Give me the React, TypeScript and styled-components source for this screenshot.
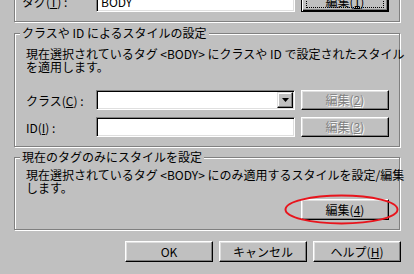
import React from 'react';
import styled, { createGlobalStyle, css } from 'styled-components';

const Global = createGlobalStyle`
  html, body { margin: 0; padding: 0; background: #c0c0c0; }
  body {
    width: 414px; height: 274px; overflow: hidden;
    font-family: "Noto Sans CJK JP", "Noto Sans", sans-serif;
    font-size: 12px; color: #000;
  }
`;

const Dialog = styled.div`
  box-sizing: border-box;
  width: 414px;
  height: 274px;
  padding: 0 14px;
  display: flex;
  flex-direction: column;
  overflow: hidden;
`;

const Group = styled.div<{ $h: number; $mt: number; $pt: number; $pl?: number }>`
  position: relative;
  box-sizing: border-box;
  flex-shrink: 0;
  height: ${p => p.$h}px;
  margin-top: ${p => p.$mt}px;
  padding: ${p => p.$pt}px 10px 0 ${p => p.$pl ?? 11}px;
  border: 1px solid #808080;
  box-shadow: inset 1px 1px 0 #fff, 1px 1px 0 #fff;
`;

const Legend = styled.span`
  position: absolute;
  top: -8px;
  left: 5px;
  padding: 0 2px;
  background: #c0c0c0;
  line-height: 14px;
  white-space: nowrap;
`;

const Desc = styled.p`
  margin: 0;
  line-height: 13px;
  white-space: nowrap;
`;

const U = styled.span`
  text-decoration: underline;
`;

const FieldRow = styled.div<{ $mt: number; $h?: number }>`
  display: flex;
  align-items: center;
  height: ${p => p.$h ?? 20}px;
  margin-top: ${p => p.$mt}px;
`;

const FieldLabel = styled.label<{ $w: number }>`
  flex-shrink: 0;
  width: ${p => p.$w}px;
  white-space: nowrap;
`;

const Field = styled.div`
  box-sizing: border-box;
  flex-shrink: 0;
  width: 199px;
  height: 100%;
  padding: 2px 2px 2px 4px;
  background: #fff;
  border: 1px solid;
  border-color: #808080 #fff #fff #808080;
  box-shadow: inset 1px 1px 0 #000, inset -1px -1px 0 #dfdfdf;
  display: flex;
  align-items: center;
  justify-content: space-between;
  line-height: 14px;
`;

const ComboField = styled(Field)`
  padding-right: 1px;
`;

const DropBtn = styled.span`
  box-sizing: border-box;
  width: 16px;
  height: 16px;
  background: #c0c0c0;
  border: 1px solid;
  border-color: #dfdfdf #000 #000 #dfdfdf;
  box-shadow: inset -1px -1px 0 #808080, inset 1px 1px 0 #fff;
  display: flex;
  align-items: center;
  justify-content: center;
`;

const Btn = styled.button<{ $w?: number; $h?: number; $default?: boolean }>`
  box-sizing: border-box;
  flex-shrink: 0;
  width: ${p => p.$w ?? 88}px;
  height: ${p => p.$h ?? 21}px;
  margin: 0;
  padding: 0;
  font-family: inherit;
  font-size: 12px;
  line-height: 14px;
  color: #000;
  background: #c0c0c0;
  border: 1px solid;
  border-color: #fff #000 #000 #fff;
  box-shadow: inset -1px -1px 0 #808080, inset 1px 1px 0 #dfdfdf;
  display: flex;
  align-items: center;
  justify-content: center;
  white-space: nowrap;
  ${p => p.$default && css`
    border-color: #000;
    box-shadow: inset 1px 1px 0 #fff, inset -1px -1px 0 #000, inset -2px -2px 0 #808080;
  `}
  &:disabled {
    color: #808080;
    text-shadow: 1px 1px 0 #fff;
  }
`;

const RowBtn = styled(Btn)`
  margin-left: 6px;
`;

const FocusRect = styled.span`
  box-sizing: border-box;
  width: 78px;
  height: 13px;
  border: 1px dotted #000;
  display: flex;
  align-items: center;
  justify-content: center;
`;

const ActionRow = styled.div`
  display: flex;
  justify-content: flex-end;
  margin-top: 5px;
  margin-right: 0;
`;

const Annotated = styled.div`
  position: relative;
`;

const Ellipse = styled.svg`
  position: absolute;
  left: -17px;
  top: -5px;
  width: 115px;
  height: 31px;
  overflow: visible;
  pointer-events: none;
`;

const Footer = styled.div`
  display: flex;
  justify-content: flex-end;
  gap: 6px;
  margin-top: 11px;
  margin-right: -1px;
`;

export default function App() {
  return (
    <>
      <Global />
      <Dialog>
        <Group $h={52} $mt={-30} $pt={20} $pl={7}>
          <FieldRow $mt={0} $h={21}>
            <FieldLabel $w={74}>タグ(<U>T</U>) :</FieldLabel>
            <Field>BODY</Field>
            <RowBtn $default $h={21}>
              <FocusRect>編集(<U>1</U>)</FocusRect>
            </RowBtn>
          </FieldRow>
        </Group>

        <Group $h={114} $mt={11} $pt={13}>
          <Legend>クラスや ID によるスタイルの設定</Legend>
          <Desc>
            現在選択されているタグ &lt;BODY&gt; にクラスや ID で設定されたスタイル
            <br />
            を適用します。
          </Desc>
          <FieldRow $mt={17}>
            <FieldLabel $w={70}>クラス(<U>C</U>) :</FieldLabel>
            <ComboField>
              <span />
              <DropBtn>
                <svg width="7" height="4" viewBox="0 0 7 4">
                  <polygon points="0,0 7,0 3.5,4" fill="#000" />
                </svg>
              </DropBtn>
            </ComboField>
            <RowBtn $h={20} disabled>編集(<U>2</U>)</RowBtn>
          </FieldRow>
          <FieldRow $mt={7}>
            <FieldLabel $w={70}>ID(<U>I</U>) :</FieldLabel>
            <Field />
            <RowBtn $h={20} disabled>編集(<U>3</U>)</RowBtn>
          </FieldRow>
        </Group>

        <Group $h={73} $mt={10} $pt={10}>
          <Legend>現在のタグのみにスタイルを設定</Legend>
          <Desc>
            現在選択されているタグ &lt;BODY&gt; にのみ適用するスタイルを設定/編集
            <br />
            します。
          </Desc>
          <ActionRow>
            <Annotated>
              <Btn>編集(<U>4</U>)</Btn>
              <Ellipse viewBox="0 0 115 31">
                <ellipse cx="57.5" cy="15.5" rx="56" ry="14" fill="none" stroke="#e8141c" strokeWidth="2" />
              </Ellipse>
            </Annotated>
          </ActionRow>
        </Group>

        <Footer>
          <Btn>OK</Btn>
          <Btn>キャンセル</Btn>
          <Btn>ヘルプ(<U>H</U>)</Btn>
        </Footer>
      </Dialog>
    </>
  );
}
